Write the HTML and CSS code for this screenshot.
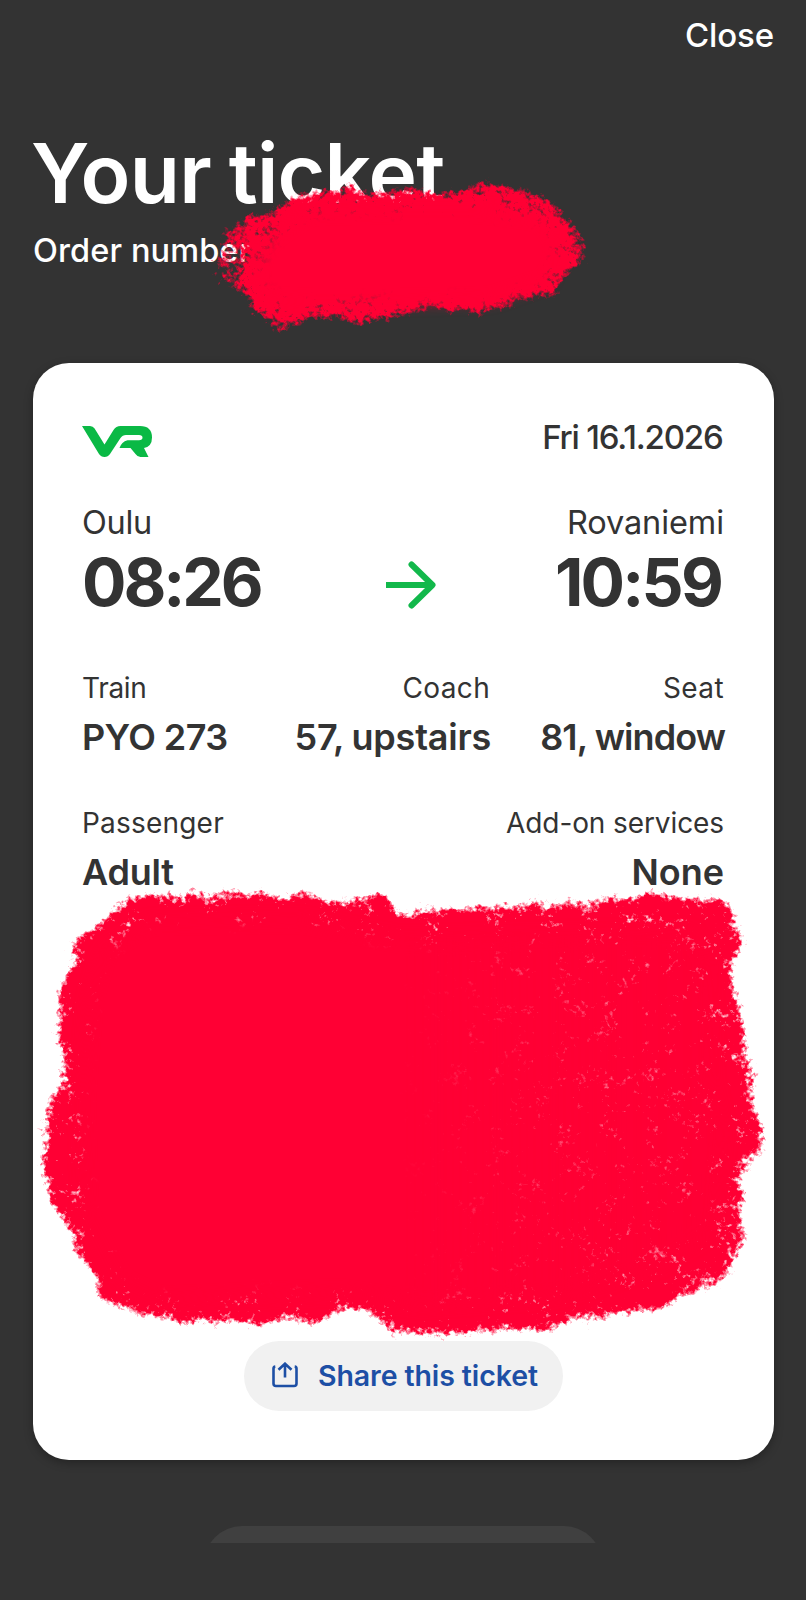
FILE: index.html
```html
<!DOCTYPE html>
<html lang="en">
<head>
<meta charset="utf-8">
<title>Your ticket</title>
<link rel="stylesheet" href="styles.css">
</head>
<body>
<div class="screen">
  <header class="topbar"><span class="close">Close</span></header>
  <h1 class="title">Your ticket</h1>
  <p class="order">Order number</p>

  <main class="card">
    <div class="row brand">
      <svg class="logo" viewBox="0 0 70 31" width="70" height="31" role="img" aria-label="VR">
        <path d="M0 0H8Q11 0 12.600 2.600L22.500 18.500L31.500 4Q34 0 38.500 0H58Q70 0 70 11.500Q70 20.500 62 22L66.500 31H58.500Q55.500 31 53.500 28L48.500 22H37.500Q39.500 16 45.500 14.300H57Q60.500 14.300 60.500 11.500Q60.500 9 57 9H44Q40.500 9 38.500 12L28 28Q26 31 22.500 31Q19 31 17 28Z"/>
      </svg>
      <span class="date">Fri 16.1.2026</span>
    </div>

    <div class="row journey">
      <div class="stop">
        <div class="place">Oulu</div>
        <div class="time">08:26</div>
      </div>
      <svg class="arrow" viewBox="0 0 50 48" width="50" height="48">
        <path d="M0 24H46"/>
        <path stroke-linecap="round" d="M25.500 3.500L46.500 24L25.500 44.500"/>
      </svg>
      <div class="stop end">
        <div class="place rovaniemi">Rovaniemi</div>
        <div class="time arrive">10:59</div>
      </div>
    </div>

    <div class="details">
      <div class="cell">
        <div class="label">Train</div>
        <div class="value pyo">PYO 273</div>
      </div>
      <div class="cell end">
        <div class="label wide coach-label">Coach</div>
        <div class="value coach">57, upstairs</div>
      </div>
      <div class="cell end">
        <div class="label wide">Seat</div>
        <div class="value seat">81, window</div>
      </div>
    </div>

    <div class="row people">
      <div class="cell">
        <div class="label passenger">Passenger</div>
        <div class="value adult">Adult</div>
      </div>
      <div class="cell end">
        <div class="label addon">Add-on services</div>
        <div class="value none">None</div>
      </div>
    </div>

    <button class="share">
      <svg viewBox="0 0 26 26" width="26" height="26">
        <path d="M3.300 4.600Q1.500 4.800 1.500 6.500V21.500Q1.500 24 4 24H22Q24.500 24 24.500 21.500V6.500Q24.500 4.800 22.700 4.600M13 15.500V2M6.500 7.700L13 1.700L19.500 7.700"/>
      </svg>
      <span>Share this ticket</span>
    </button>
  </main>

  <div class="next"><div class="next-pill"></div></div>

  <svg class="paint" viewBox="0 0 806 1600" width="806" height="1600" aria-hidden="true">
    <defs>
      <filter id="brush" filterUnits="userSpaceOnUse" x="0" y="0" width="806" height="1600" color-interpolation-filters="sRGB">
        <feTurbulence type="fractalNoise" baseFrequency="0.22" numOctaves="3" seed="7" result="fine"/>
        <feTurbulence type="fractalNoise" baseFrequency="0.045" numOctaves="4" seed="3" result="coarse"/>
        <feColorMatrix in="fine" values="0 0 0 0 1  0 0 0 0 1  0 0 0 0 1  1 0 0 0 0" result="fineGrain"/>
        <feColorMatrix in="coarse" values="0 0 0 0 1  0 0 0 0 1  0 0 0 0 1  0 0 1 0 0" result="coarseGrain"/>
        <feComposite in="fineGrain" in2="coarseGrain" operator="arithmetic" k1="0" k2="0.700" k3="0.600" k4="-0.150" result="grain"/>
        <feDisplacementMap in="SourceGraphic" in2="coarse" scale="14" xChannelSelector="R" yChannelSelector="G" result="rough"/>
        <feGaussianBlur in="rough" stdDeviation="6.500" result="soft"/>
        <feComposite in="soft" in2="grain" operator="arithmetic" k1="0" k2="3.500" k3="3.800" k4="-3.550" result="mask"/>
        <feFlood flood-color="#ff0034" result="red"/>
        <feComposite in="red" in2="mask" operator="in" result="painted"/>
        <feMorphology in="rough" operator="dilate" radius="14" result="spread"/>
        <feColorMatrix in="spread" values="1 0 0 0 0  0 1 0 0 0  0 0 1 0 0  0 0 0 4 0" result="near"/>
        <feComposite in="painted" in2="near" operator="in"/>
      </filter>
      <filter id="soften" filterUnits="userSpaceOnUse" x="0" y="0" width="806" height="1600" color-interpolation-filters="sRGB">
        <feGaussianBlur stdDeviation="7"/>
      </filter>
      <linearGradient id="wear" x1="0" x2="1">
        <stop offset="0" stop-opacity="0.940"/>
        <stop offset="0.450" stop-opacity="0.960"/>
        <stop offset="0.700" stop-opacity="0.930"/>
        <stop offset="1" stop-opacity="0.910"/>
      </linearGradient>
      <linearGradient id="fade" x1="0" x2="1">
        <stop offset="0" stop-opacity="0.550"/>
        <stop offset="0.100" stop-opacity="0.720"/>
        <stop offset="0.200" stop-opacity="0.920"/>
        <stop offset="0.900" stop-opacity="0.900"/>
        <stop offset="1" stop-opacity="0.700"/>
      </linearGradient>
      <linearGradient id="solid" x1="0" x2="1">
        <stop offset="0" stop-color="#ff0034"/>
        <stop offset="0.500" stop-color="#ff0034"/>
        <stop offset="0.800" stop-color="#ff0034" stop-opacity="0.500"/>
        <stop offset="1" stop-color="#ff0034" stop-opacity="0.400"/>
      </linearGradient>
    </defs>
    <g filter="url(#brush)">
      <path fill="url(#fade)" d="M228 222L245 218L262 212L278 205L290 196L320 187L360 186L400 187L440 190L465 190L485 183L515 190L545 198L557 202L562 213L578 222L580 235L592 255L586 264L572 273L562 290L545 298L520 304L500 312L440 311L400 313L380 318L365 323L350 329L330 320L310 315L300 327L278 334L262 322L252 312L240 302L225 290L214 282L217 270L208 260L218 245L222 230Z"/>
      <path fill="url(#wear)" d="M84 932L88 929L100 924L115 908L130 898L150 894L190 893L230 891L270 892L310 896L350 903L362 900L372 888L380 890L390 898L392 914L420 911L430 908L500 905L560 904L600 900L640 893L700 894L712 899L733 904L735 925L737 938L750 946L738 960L733 975L738 1000L750 1050L755 1100L765 1130L762 1150L754 1167L741 1172L742 1200L741 1225L746 1232L735 1255L733 1266L720 1285L690 1295L670 1306L620 1316L560 1326L500 1333L450 1336L410 1337L386 1334L396 1325L378 1318L355 1310L340 1311L330 1322L250 1322L160 1321L130 1312L109 1303L98 1289L90 1270L76 1255L74 1235L58 1218L48 1200L43 1170L43 1140L46 1110L56 1093L67 1083L58 1065L54 1040L55 1010L60 990L66 975L68 955L76 940Z"/>
    </g>
    <g filter="url(#soften)">
      <path fill="#ff0034" d="M275 235L310 212L400 210L480 210L540 218L560 245L548 280L490 300L400 302L310 302L270 300L255 280L262 250Z"/>
      <path fill="url(#solid)" d="M105 950L150 922L300 920L400 940L690 930L710 960L712 1080L725 1130L715 1230L660 1265L560 1295L420 1305L340 1292L160 1300L120 1280L85 1210L82 1100L90 1000Z"/>
    </g>
  </svg>
</div>
</body>
</html>
```
FILE: styles.css
```css
* { box-sizing: border-box; }

body {
  margin: 0;
  background: #333;
  color: #333;
  font-family: Inter, "Liberation Sans", sans-serif;
}

.screen {
  position: relative;
  width: 806px;
  height: 1600px;
  padding: 15px 32px 0 33px;
  overflow: hidden;
}

.topbar {
  display: flex;
  justify-content: flex-end;
  height: 40px;
  color: #fff;
}

.close {
  font-size: 33px;
  font-weight: 540;
  line-height: 40px;
  letter-spacing: -0.1px;
}

.title {
  margin: 71px 0 0 -2px;
  color: #fff;
  font-size: 82px;
  font-weight: 630;
  line-height: 96px;
  letter-spacing: -0.8px;
  word-spacing: -2px;
}

.order {
  margin: 9px 0 0;
  color: #fff;
  font-size: 32.5px;
  font-weight: 540;
  line-height: 40px;
  letter-spacing: 0.1px;
}

.card {
  height: 1097px;
  margin-top: 92px;
  padding: 54px 50px 0 49px;
  border-radius: 36px;
  background: #fff;
  box-shadow: 0 3px 10px rgba(0, 0, 0, 0.3);
}

.row {
  display: flex;
  justify-content: space-between;
}

.brand { height: 40px; }

.logo {
  margin-top: 9px;
  fill: #0ab945;
}

.date {
  margin-right: 1.5px;
  font-size: 33px;
  font-weight: 540;
  line-height: 40px;
  letter-spacing: -1.2px;
}

.journey {
  margin-top: 46px;
}

.end { text-align: right; }

.place {
  font-size: 32.5px;
  line-height: 40px;
  letter-spacing: -0.3px;
}

.rovaniemi { letter-spacing: -0.1px; }

.time {
  margin-top: 3px;
  font-size: 66px;
  font-weight: 650;
  line-height: 72px;
  letter-spacing: -3.1px;
}

.arrive {
  margin-right: 3px;
  letter-spacing: -2.8px;
}

.arrow {
  margin-top: 58px;
  margin-left: 7px;
  fill: none;
  stroke: #12b84b;
  stroke-width: 6;
  stroke-linejoin: round;
}

.details {
  display: grid;
  grid-template-columns: 1fr auto auto;
  column-gap: 49px;
  margin-top: 52px;
}

.label {
  font-size: 28px;
  line-height: 36px;
  letter-spacing: -0.3px;
}

.wide { letter-spacing: 0.4px; }
.coach-label { margin-right: 1px; }
.passenger { letter-spacing: 0.2px; }
.addon { letter-spacing: -0.1px; }

.value {
  margin-top: 9px;
  font-size: 36px;
  font-weight: 640;
  line-height: 44px;
}

.pyo { letter-spacing: -0.6px; }
.coach { letter-spacing: -0.2px; word-spacing: -1px; }
.seat { letter-spacing: -0.9px; margin-right: -1px; }
.adult { letter-spacing: -0.2px; }
.none { letter-spacing: 0; }

.people { margin-top: 46px; }

.share {
  display: flex;
  align-items: center;
  width: 319px;
  height: 70px;
  margin: 447px auto 0 162px;
  padding: 0 0 2px 28px;
  gap: 20px;
  border: 0;
  border-radius: 35px;
  background: #f1f1f1;
  color: #1d4fa5;
  font-family: inherit;
  font-size: 28.5px;
  font-weight: 640;
  letter-spacing: -0.1px;
  white-space: nowrap;
}

.share svg {
  fill: none;
  stroke: #1d4fa5;
  stroke-width: 2.6;
}

.next {
  height: 17px;
  margin-top: 66px;
  overflow: hidden;
}

.next-pill {
  width: 398px;
  height: 76px;
  margin: 0 auto 0 171px;
  border-radius: 38px;
  background: #404040;
}

.paint {
  position: absolute;
  left: 0;
  top: 0;
}
```
